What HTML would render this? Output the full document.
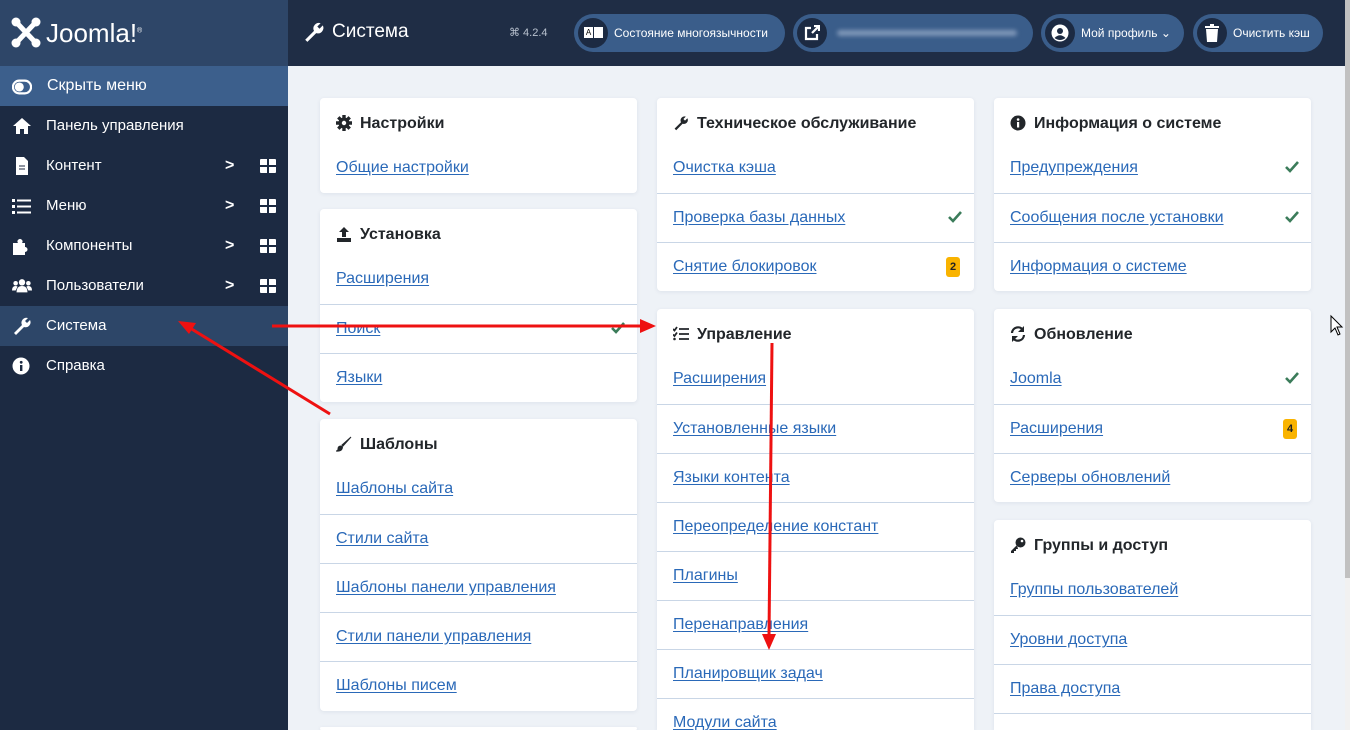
<!DOCTYPE html>
<html style="width:1350px;height:730px;overflow:hidden"><head><meta charset="utf-8">
<style>
*{box-sizing:border-box;margin:0;padding:0}
body{width:1350px;height:730px;overflow:hidden;background:#eef2f7;font-family:"Liberation Sans",sans-serif;position:relative}
#side{position:absolute;left:0;top:0;width:288px;bottom:0;height:730px;background:#1c2a42}
#logo{height:66px;background:#2e4668;position:relative}
.mi{position:absolute;left:0;width:288px;height:40px;color:#fff;font-size:15px;line-height:40px;padding-left:46px}
.mi .ic{position:absolute;left:12px;top:11px;width:20px;height:18px}
.mi .ch{position:absolute;left:225px;top:0;font-size:16px;font-weight:bold}
.mi .gr{position:absolute;left:260px;top:13px;width:16px;height:14px;background:
linear-gradient(#1c2a42,#1c2a42) 7px 0/2px 14px no-repeat,linear-gradient(#1c2a42,#1c2a42) 0 6px/16px 2px no-repeat,#fff;border-radius:1px}
#top{position:absolute;left:288px;top:0;width:1062px;height:66px;background:#1f2d45}
.pill{position:absolute;top:14px;height:38px;border-radius:19px;background:#3a5d8a;color:#fff;font-size:12px;line-height:38px}
.pill .c{position:absolute;left:4px;top:4px;width:30px;height:30px;border-radius:15px;background:#1c2a42}
.card{position:absolute;width:317px;background:#fff;border-radius:4px;box-shadow:0 1px 4px rgba(30,50,90,.08);overflow:hidden}
.card h3{height:46px;font-size:16px;font-weight:bold;color:#22262a;padding:17px 0 0 40px;position:relative}
.card h3 svg{position:absolute;left:16px;top:17px}
.card a{display:block;height:49px;border-top:1px solid #c9d6e6;color:#2a69b8;font-size:16px;line-height:48px;padding-left:16px;position:relative;text-decoration:underline;text-underline-offset:2px}
.card a:first-of-type{border-top:none}
.card a .ck{position:absolute;right:12px;top:16px}
.bd{position:absolute;right:14px;top:14px;width:14px;height:20px;background:#f9b300;border-radius:3px;color:#222;font-size:11px;font-weight:bold;line-height:20px;text-align:center}
</style></head><body>
<div id="side">
 <div id="logo">
  <svg style="position:absolute;left:11px;top:17px" width="30" height="31" viewBox="0 0 30 31"><g stroke="#fff" stroke-width="5" stroke-linecap="round" fill="none"><path d="M6 6 L24 25"/><path d="M24 6 L6 25"/></g><circle cx="5" cy="5" r="4.5" fill="#fff"/><circle cx="25" cy="5" r="4.5" fill="#fff"/><circle cx="5" cy="26" r="4.5" fill="#fff"/><circle cx="25" cy="26" r="4.5" fill="#fff"/></svg>
  <div style="position:absolute;left:46px;top:18px;color:#fff;font-size:26px;font-weight:300;letter-spacing:0">Joomla!<sup style="font-size:7px">®</sup></div>
 </div>
 <div class="mi" style="top:66px;background:#3c5f8c;font-size:16px;padding-left:47px"><svg class="ic" style="top:12px" width="22" height="16" viewBox="0 0 22 16"><rect x="1" y="1" width="20" height="14" rx="7" fill="none" stroke="#fff" stroke-width="2.4"/><circle cx="8" cy="8" r="5" fill="#fff"/></svg>Скрыть меню</div>
 <div class="mi" style="top:106px"><svg class="ic" viewBox="0 0 20 18"><path d="M10 1 L1 9 H4 V17 H8 V12 H12 V17 H16 V9 H19 Z" fill="#fff"/></svg>Панель управления</div>
 <div class="mi" style="top:146px"><svg class="ic" viewBox="0 0 20 18"><path d="M4 0 H12 L16 4 V18 H4 Z" fill="#fff"/><path d="M7 9h6M7 12h6" stroke="#1c2a42"/></svg>Контент<span class="ch">&gt;</span><span class="gr"></span></div>
 <div class="mi" style="top:186px"><svg class="ic" viewBox="0 0 20 18"><g fill="#fff"><rect x="0" y="2" width="3" height="3"/><rect x="0" y="8" width="3" height="3"/><rect x="0" y="14" width="3" height="3"/><rect x="5" y="2.5" width="14" height="2"/><rect x="5" y="8.5" width="14" height="2"/><rect x="5" y="14.5" width="14" height="2"/></g></svg>Меню<span class="ch">&gt;</span><span class="gr"></span></div>
 <div class="mi" style="top:226px"><svg class="ic" viewBox="0 0 20 18"><path d="M1 6 H6 A2.5 2.5 0 1 1 10 6 H13 V10 A2.5 2.5 0 1 1 13 15 V18 H1 Z" fill="#fff"/></svg>Компоненты<span class="ch">&gt;</span><span class="gr"></span></div>
 <div class="mi" style="top:266px"><svg class="ic" viewBox="0 0 22 18"><g fill="#fff"><circle cx="11" cy="5" r="3.5"/><circle cx="4" cy="6" r="2.5"/><circle cx="18" cy="6" r="2.5"/><path d="M5 16 Q5 9 11 9 Q17 9 17 16Z"/><path d="M0 14 Q0 9 4 9 Q6 9 6 10 L4 14Z"/><path d="M22 14 Q22 9 18 9 Q16 9 16 10 L18 14Z"/></g></svg>Пользователи<span class="ch">&gt;</span><span class="gr"></span></div>
 <div class="mi" style="top:306px;background:#2d4668"><svg class="ic" viewBox="0 0 20 18"><path d="M2 16 L10 8 A5 5 0 0 1 16 1 L13 4 L15 6 L18 3 A5 5 0 0 1 12 10 L4 18 Z" fill="#fff"/></svg>Система</div>
 <div class="mi" style="top:346px"><svg class="ic" viewBox="0 0 20 18"><circle cx="9" cy="9" r="8.5" fill="#fff"/><rect x="8" y="8" width="2.4" height="6" fill="#1c2a42"/><circle cx="9.2" cy="5.3" r="1.4" fill="#1c2a42"/></svg>Справка</div>
</div>
<div id="top">
 <svg style="position:absolute;left:15px;top:22px" width="22" height="20" viewBox="0 0 20 18"><path d="M2 16 L10 8 A5 5 0 0 1 16 1 L13 4 L15 6 L18 3 A5 5 0 0 1 12 10 L4 18 Z" fill="#fff"/></svg>
 <div style="position:absolute;left:44px;top:21px;color:#fff;font-size:19px">Система</div>
 <div style="position:absolute;left:221px;top:26px;color:#b9c2cf;font-size:11px">⌘ 4.2.4</div>
 <div class="pill" style="left:286px;width:211px"><span class="c"></span><span style="position:absolute;left:10px;top:13px;width:9px;height:11px;background:#fff;font-size:8px;line-height:11px;color:#000;text-align:center">A</span><span style="position:absolute;left:20px;top:13px;width:9px;height:11px;background:#fff"></span><span style="padding-left:40px">Состояние многоязычности</span></div>
 <div class="pill" style="left:505px;width:240px"><span class="c"></span><svg style="position:absolute;left:11px;top:11px" width="16" height="16" viewBox="0 0 16 16"><path d="M7 3H2v11h11V9" stroke="#fff" stroke-width="2.2" fill="none"/><path d="M8 8L15 1M10 1h5v5" stroke="#fff" stroke-width="2.2" fill="none"/></svg><span style="position:absolute;left:44px;top:16px;width:180px;height:6px;background:#7f97b8;border-radius:3px;filter:blur(2px)"></span></div>
 <div class="pill" style="left:753px;width:143px"><span class="c"></span><svg style="position:absolute;left:10px;top:10px" width="18" height="18" viewBox="0 0 18 18"><circle cx="9" cy="9" r="8.5" fill="#fff"/><circle cx="9" cy="7" r="3" fill="#1c2a42"/><path d="M3.5 14 Q9 8.5 14.5 14 Q9 18 3.5 14Z" fill="#1c2a42"/></svg><span style="padding-left:40px">Мой профиль ⌄</span></div>
 <div class="pill" style="left:905px;width:130px"><span class="c"></span><svg style="position:absolute;left:12px;top:10px" width="14" height="18" viewBox="0 0 14 18"><path d="M0 2h14v2H0zM5 0h4v2H5zM1 5h12l-1 13H2z" fill="#fff"/></svg><span style="padding-left:40px">Очистить кэш</span></div>
</div>
<div style="position:absolute;left:1345px;top:0;width:5px;height:730px;background:#f1f1f1"></div>
<div style="position:absolute;left:1345px;top:0;width:5px;height:578px;background:#c1c1c1"></div>

<svg width="0" height="0" style="position:absolute"><defs><path id="ck" d="M1 7 L5 11 L13 2" stroke="#3b7c5a" stroke-width="2.6" fill="none"/></defs></svg>

<div class="card" style="left:320px;top:98px"><h3><svg width="16" height="16" viewBox="0 0 16 16"><circle cx="8" cy="8" r="5.5" fill="#22262a"/><g stroke="#22262a" stroke-width="3.4"><path d="M8 0v16M0 8h16M2.3 2.3l11.4 11.4M13.7 2.3L2.3 13.7"/></g><circle cx="8" cy="8" r="2.2" fill="#fff"/></svg>Настройки</h3><a>Общие настройки</a></div>
<div class="card" style="left:320px;top:209px"><h3><svg width="16" height="16" viewBox="0 0 16 16"><path d="M8 1L3 6h3v5h4V6h3z M1 12h14v4H1z" fill="#22262a"/></svg>Установка</h3><a>Расширения</a><a>Поиск<svg class="ck" width="14" height="13"><use href="#ck"/></svg></a><a>Языки</a></div>
<div class="card" style="left:320px;top:419px;height:292px"><h3><svg width="16" height="16" viewBox="0 0 16 16"><path d="M15 1L7 10l-1-1z M5 10 Q2 10 2 13 Q2 15 0 15 Q6 16 6.5 11z" fill="#22262a" stroke="#22262a"/></svg>Шаблоны</h3><a>Шаблоны сайта</a><a>Стили сайта</a><a>Шаблоны панели управления</a><a>Стили панели управления</a><a>Шаблоны писем</a></div>
<div class="card" style="left:320px;top:727px;height:3px"></div>

<div class="card" style="left:657px;top:98px"><h3><svg width="16" height="16" viewBox="0 0 20 18"><path d="M2 16 L10 8 A5 5 0 0 1 16 1 L13 4 L15 6 L18 3 A5 5 0 0 1 12 10 L4 18 Z" fill="#22262a"/></svg>Техническое обслуживание</h3><a>Очистка кэша</a><a>Проверка базы данных<svg class="ck" width="14" height="13"><use href="#ck"/></svg></a><a>Снятие блокировок<span class="bd">2</span></a></div>
<div class="card" style="left:657px;top:309px;height:421px;border-radius:4px 4px 0 0"><h3><svg width="16" height="16" viewBox="0 0 16 16"><g stroke="#22262a" stroke-width="1.8" fill="none"><path d="M0 3l1.5 1.5L4 1M0 8.5l1.5 1.5L4 6.5"/><path d="M6 3h10M6 8h10M6 13h10"/></g><circle cx="1.5" cy="13" r="1.3" fill="#22262a"/></svg>Управление</h3><a>Расширения</a><a>Установленные языки</a><a>Языки контента</a><a>Переопределение констант</a><a>Плагины</a><a>Перенаправления</a><a>Планировщик задач</a><a>Модули сайта</a></div>

<div class="card" style="left:994px;top:98px"><h3><svg width="16" height="16" viewBox="0 0 16 16"><circle cx="8" cy="8" r="7.5" fill="#22262a"/><rect x="7" y="7" width="2.2" height="5.5" fill="#fff"/><circle cx="8.1" cy="4.5" r="1.3" fill="#fff"/></svg>Информация о системе</h3><a>Предупреждения<svg class="ck" width="14" height="13"><use href="#ck"/></svg></a><a>Сообщения после установки<svg class="ck" width="14" height="13"><use href="#ck"/></svg></a><a>Информация о системе</a></div>
<div class="card" style="left:994px;top:309px"><h3><svg width="16" height="16" viewBox="0 0 16 16"><g stroke="#22262a" stroke-width="2.2" fill="none"><path d="M2 7A6 6 0 0 1 13 4"/><path d="M14 9A6 6 0 0 1 3 12"/></g><path d="M14 0v6H8z M2 16v-6h6z" fill="#22262a"/></svg>Обновление</h3><a>Joomla<svg class="ck" width="14" height="13"><use href="#ck"/></svg></a><a>Расширения<span class="bd">4</span></a><a>Серверы обновлений</a></div>
<div class="card" style="left:994px;top:520px;height:210px;border-radius:4px 4px 0 0"><h3><svg width="16" height="16" viewBox="0 0 16 16"><circle cx="10.5" cy="5.5" r="5" fill="#22262a"/><path d="M7 8L1 14v2h3v-2h2v-2h2z" fill="#22262a"/><circle cx="12" cy="4" r="1.3" fill="#fff"/></svg>Группы и доступ</h3><a>Группы пользователей</a><a>Уровни доступа</a><a>Права доступа</a><a></a></div>

<svg style="position:absolute;left:0;top:0" width="1350" height="730">
 <g stroke="#ee1111" stroke-width="3" fill="#ee1111">
  <line x1="272" y1="326" x2="642" y2="326"/><path d="M656 326 L640 319 L640 333Z" stroke="none"/>
  <line x1="330" y1="414" x2="190" y2="328"/><path d="M178 321 L196 323 L189 334Z" stroke="none"/>
  <line x1="772" y1="343" x2="769" y2="636"/><path d="M769 650 L762 634 L776 634Z" stroke="none"/>
 </g>
 <path d="M1331 316 L1331 332 L1335 328 L1338 335 L1340 334 L1337 327 L1342 327 Z" fill="#fff" stroke="#000" stroke-width="1"/>
</svg>
</body></html>
